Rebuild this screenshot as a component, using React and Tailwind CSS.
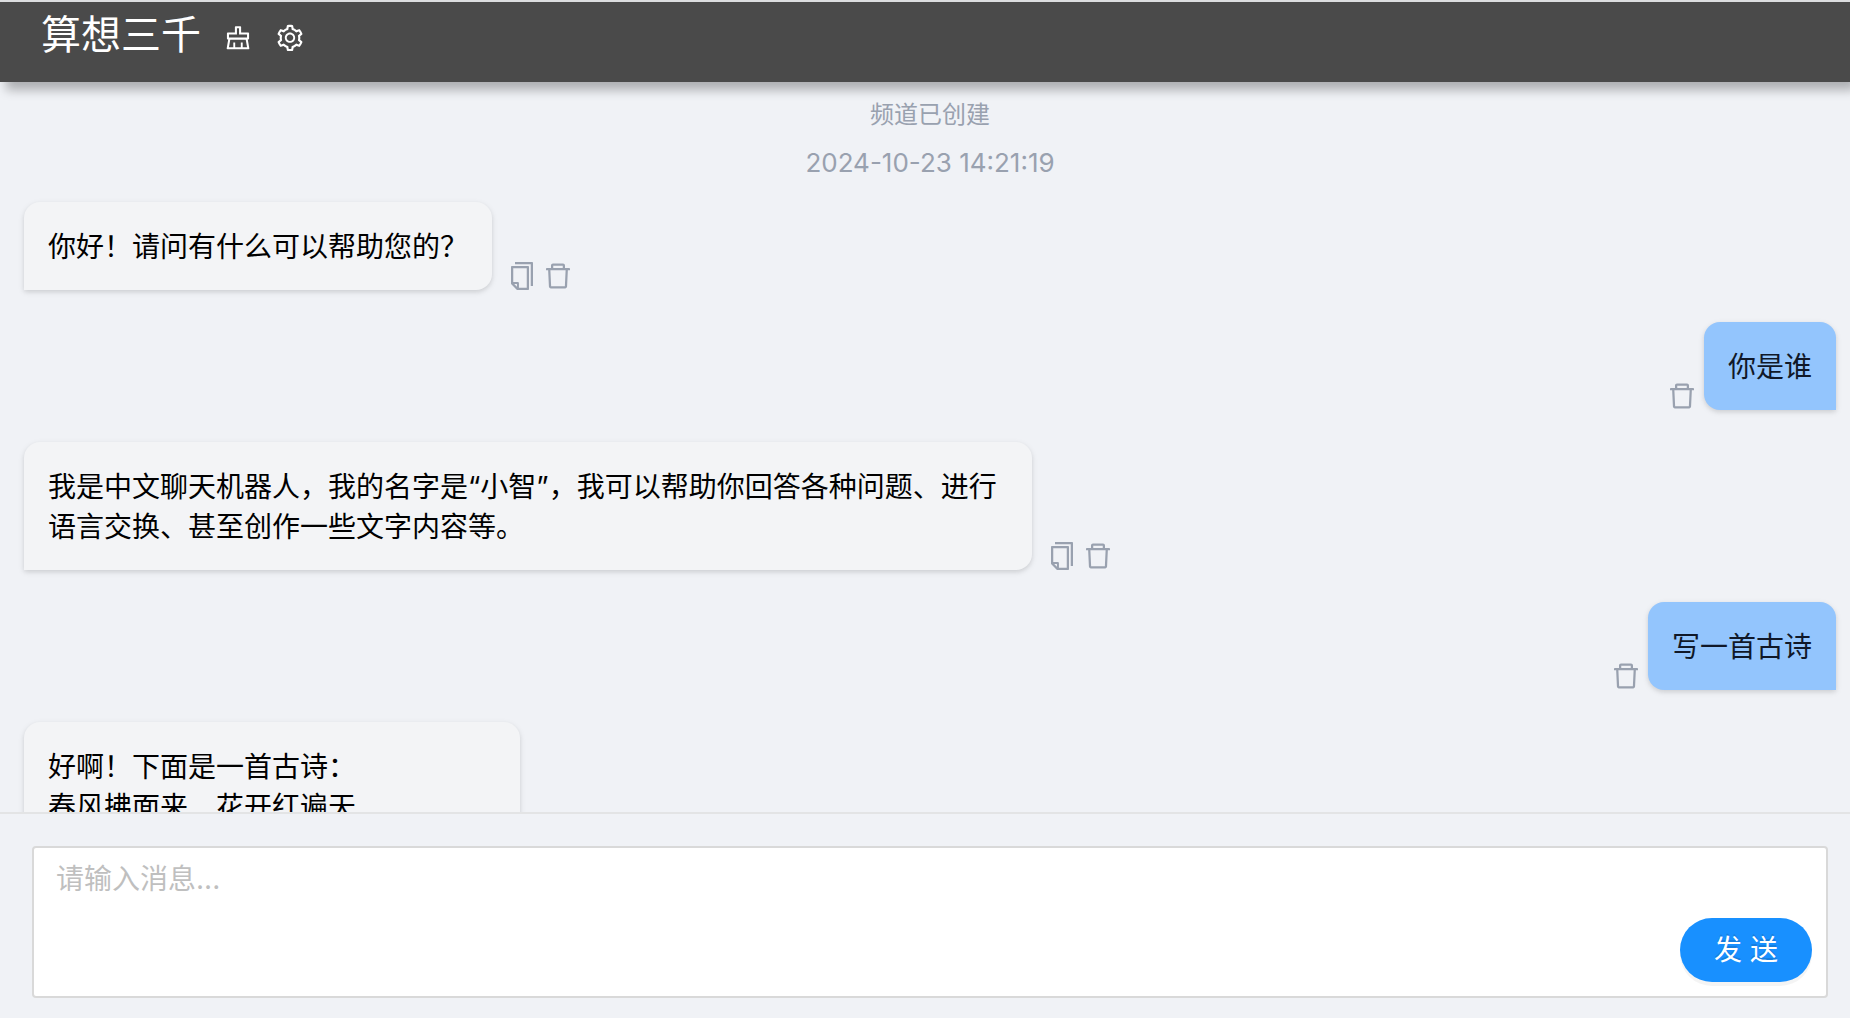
import {
  AiOutlineClear,
  AiOutlineCopy,
  AiOutlineDelete,
  AiOutlineSetting,
} from "react-icons/ai";

const messages = [
  { id: 1, role: "bot", text: "你好！请问有什么可以帮助您的？" },
  { id: 2, role: "user", text: "你是谁" },
  {
    id: 3,
    role: "bot",
    text: "我是中文聊天机器人，我的名字是“小智”，我可以帮助你回答各种问题、进行语言交换、甚至创作一些文字内容等。",
  },
  { id: 4, role: "user", text: "写一首古诗" },
  {
    id: 5,
    role: "bot",
    text: "好啊！下面是一首古诗：\n春风拂面来　花开红遍天",
    width: "min-w-[496px]",
  },
];

const IconButton = ({ label, icon: Icon }) => (
  <button type="button" aria-label={label} className="cursor-pointer">
    <Icon className="size-8" />
  </button>
);

const Header = () => (
  <header className="z-10 flex h-[82px] shrink-0 items-start gap-[22px] border-t-2 border-[#dcdddf] bg-[#4a4a4a] px-[41px] text-white shadow-[6px_8px_10px_rgba(0,0,0,0.28)]">
    <h1 className="pt-px text-[40px] leading-16">算想三千</h1>
    <div className="flex gap-[22px] pt-[21px]">
      <button type="button" aria-label="清空" className="cursor-pointer">
        <AiOutlineClear className="size-[30px]" />
      </button>
      <button type="button" aria-label="设置" className="cursor-pointer">
        <AiOutlineSetting className="size-[30px]" />
      </button>
    </div>
  </header>
);

const Message = ({ role, text, width = "" }) => {
  if (role === "user") {
    return (
      <li className="flex items-end justify-end gap-1.5 text-gray-400">
        <IconButton label="删除" icon={AiOutlineDelete} />
        <p className="mb-0.5 rounded-2xl rounded-br-none bg-[#93c5fd] px-6 pt-[25px] pb-[23px] text-gray-900 shadow-[0_2px_6px_rgba(0,0,0,0.1),0_2px_4px_rgba(0,0,0,0.06)]">
          {text}
        </p>
      </li>
    );
  }

  return (
    <li className="flex items-end gap-3.5 text-gray-400">
      <p
        className={`mb-0.5 max-w-[1008px] rounded-2xl rounded-bl-none bg-[#f3f4f6] px-6 pt-[25px] pb-[23px] whitespace-pre-line text-black shadow-[0_2px_6px_rgba(0,0,0,0.1),0_2px_4px_rgba(0,0,0,0.06)] ${width}`}
      >
        {text}
      </p>
      <div className="flex gap-1">
        <IconButton label="复制" icon={AiOutlineCopy} />
        <IconButton label="删除" icon={AiOutlineDelete} />
      </div>
    </li>
  );
};

const Composer = () => (
  <form
    className="shrink-0 border-t-2 border-[#e3e4e5] pt-8 pr-[22px] pb-5 pl-8"
    onSubmit={(e) => e.preventDefault()}
  >
    <div className="flex h-[152px] items-end rounded-sm border-2 border-[#d9d9d9] bg-white pr-3.5">
      <textarea
        aria-label="消息"
        placeholder="请输入消息..."
        className="h-full flex-1 resize-none px-[22px] py-[11px] outline-none placeholder:text-[#bfbfbf]"
      />
      <button
        type="submit"
        className="mb-3.5 h-16 w-[132px] cursor-pointer rounded-full bg-[#1890ff] text-white shadow-[0_4px_0_rgba(0,0,0,0.045)] text-shadow-[0_-2px_0_rgba(0,0,0,0.12)]"
      >
        发 送
      </button>
    </div>
  </form>
);

const App = () => {
  return (
    <div className="flex h-screen flex-col bg-[#f0f2f6] font-['Inter','Noto_Sans_CJK_SC',sans-serif] text-[28px] leading-10">
      <Header />

      <main className="min-h-0 flex-1 overflow-hidden pt-[9px] pr-3.5 pl-6">
        <div className="mb-[15px] text-center text-gray-400">
          <p className="text-2xl leading-12">频道已创建</p>
          <p className="text-[26px] leading-12">2024-10-23 14:21:19</p>
        </div>
        <ul className="flex flex-col gap-[30px]">
          {messages.map((message) => (
            <Message key={message.id} {...message} />
          ))}
        </ul>
      </main>

      <Composer />
    </div>
  );
};

export default App;
